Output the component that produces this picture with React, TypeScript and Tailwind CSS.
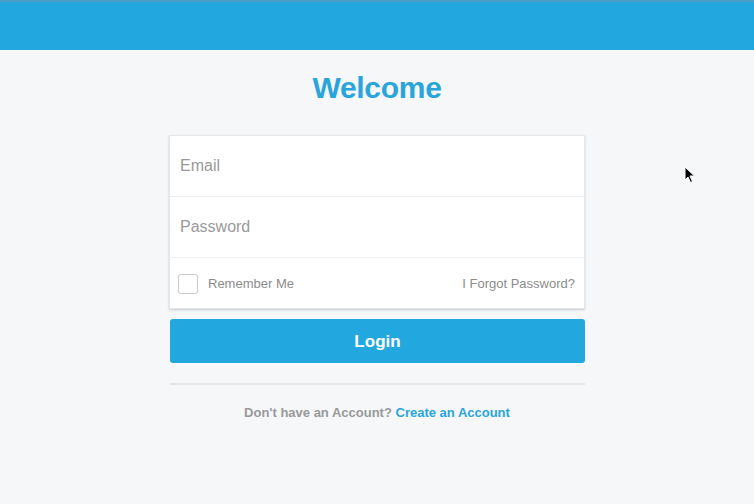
import React, { useState } from 'react';

const App: React.FC = () => {
  const [email, setEmail] = useState('');
  const [password, setPassword] = useState('');
  const [remember, setRemember] = useState(false);

  return (
    <div
      className="relative min-h-[504px] w-full bg-[#f5f7f9]"
      style={{ fontFamily: '"Liberation Sans", Arial, sans-serif' }}
    >
      {/* 顶部栏 */}
      <div className="h-[50px] border-t-2 border-[#4c9cc3] bg-[#22a8df]" />

      <div className="flex flex-col items-center">
        <h1 className="mt-[20px] text-[30px] leading-[36px] font-bold text-[#29a5dc] tracking-[-0.3px]">
          Welcome
        </h1>

        <div className="mt-[29px] w-[416px]">
          {/* 表单卡片 */}
          <div className="border border-[#e4e6e8] bg-white shadow-[0_1px_2px_rgba(0,0,0,0.2)]">
            <div className="h-[61px] border-b border-[#eceeef] flex items-center px-[10px]">
              <input
                type="email"
                value={email}
                onChange={(e) => setEmail(e.target.value)}
                placeholder="Email"
                className="w-full bg-transparent text-[16px] text-[#555] placeholder:text-[#999] outline-none"
              />
            </div>
            <div className="h-[61px] border-b border-[#eceeef] flex items-center px-[10px]">
              <input
                type="password"
                value={password}
                onChange={(e) => setPassword(e.target.value)}
                placeholder="Password"
                className="w-full bg-transparent text-[16px] text-[#555] placeholder:text-[#999] outline-none"
              />
            </div>
            <div className="h-[50px] flex items-center justify-between pt-[2px] pl-[8px] pr-[9px]">
              <label className="flex items-center cursor-pointer">
                <button
                  type="button"
                  onClick={() => setRemember(!remember)}
                  className="w-[20px] h-[20px] rounded-[3px] border border-[#c9c9c9] bg-white"
                />
                <span className="ml-[10px] text-[13px] text-[#8c8c8c]">Remember Me</span>
              </label>
              <a className="text-[13px] text-[#8c8c8c] cursor-pointer">I Forgot Password?</a>
            </div>
          </div>

          <div className="pl-[1px]">
            <button className="mt-[10px] w-full h-[44px] pt-[2px] rounded-[3px] bg-[#22a8df] text-white text-[17px] font-bold">
              Login
            </button>

            <div className="mt-[20px] h-[2px] bg-[#e3e5e8]" />
          </div>

          <p className="mt-[18px] text-center text-[13px] font-bold text-[#999]">
            Don't have an Account? <a className="text-[#29a5dc] cursor-pointer">Create an Account</a>
          </p>
        </div>
      </div>

      {/* 鼠标指针 */}
      <svg className="absolute left-[684px] top-[166px]" width="12" height="18" viewBox="0 0 12 18">
        <path d="M1 1 L1 14 L4 11 L6.5 16.5 L8.5 15.5 L6 10 L10.5 10 Z" fill="#000" stroke="#fff" strokeWidth="1" />
      </svg>
    </div>
  );
};

export default App;
